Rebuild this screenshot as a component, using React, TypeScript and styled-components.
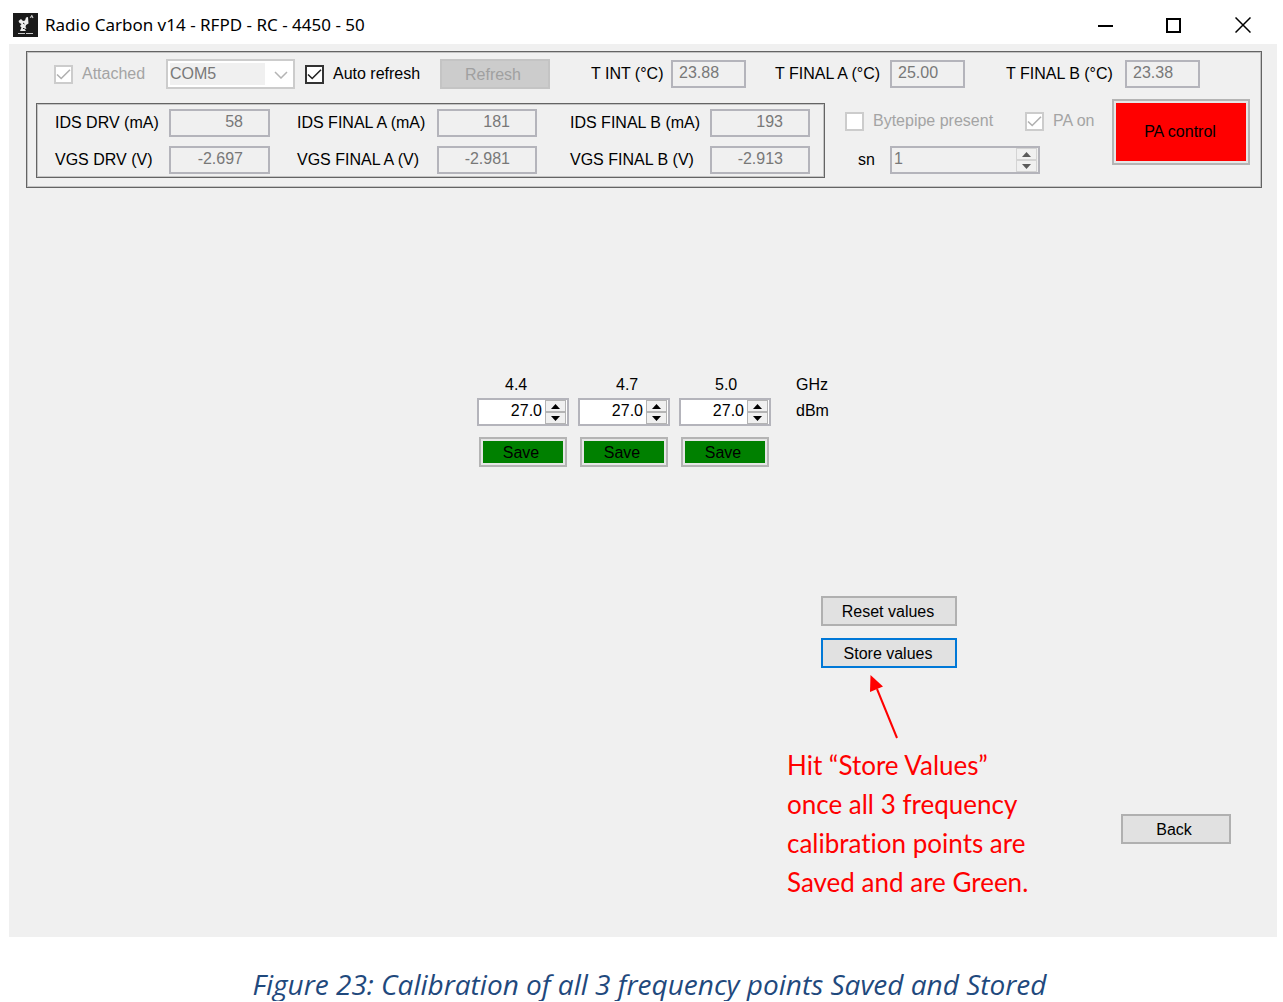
import React, { useState } from "react";
import styled, { createGlobalStyle, css } from "styled-components";

const ui = `"Liberation Sans", Arial, sans-serif`;

const GlobalStyle = createGlobalStyle`
  * { box-sizing: border-box; }
  body { margin: 0; background: #fff; color: #000; font: 16px/20px ${ui}; }
  button, input, select { font: inherit; color: inherit; margin: 0; border-radius: 0; }
`;

const Page = styled.figure`
  margin: 0;
  padding: 0 6px 0 9px;
`;

const TitleBar = styled.header`
  display: flex;
  align-items: center;
  height: 44px;
  padding: 6px 0 0 4px;
  background: #fff;
`;

const Title = styled.h1`
  flex: 1;
  margin: 0 0 0 7px;
  font: 400 17px/24px "Noto Sans", "Open Sans", sans-serif;
`;

const CaptionButton = styled.button`
  display: grid;
  place-items: center;
  width: 69px;
  height: 38px;
  padding: 0;
  border: 0;
  background: transparent;
`;

const Client = styled.main`
  display: flex;
  flex-direction: column;
  padding: 7px 15px 35px 17px;
  background: #f0f0f0;
`;

const frame = css`
  border: 1px solid #646464;
  box-shadow: inset 0 0 0 1px #c4c4c4;
`;

const StatusPanel = styled.section`
  ${frame}
  display: flex;
  flex-direction: column;
  gap: 10px;
  padding: 7px 11px 9px 9px;
`;

const ConnectionRow = styled.div`
  display: grid;
  grid-template-columns: 112px 139px 135px 151px 80px 104px 115px 116px 119px 75px;
  align-items: center;
  height: 30px;
  padding-left: 18px;
`;

const ReadingsRow = styled.div`
  display: flex;
  align-items: flex-start;
`;

const Readings = styled.div`
  ${frame}
  display: grid;
  grid-template-columns: 114px 101px 167px 100px 173px 100px;
  row-gap: 9px;
  align-items: center;
  margin-top: 4px;
  padding: 5px 14px 3px 18px;
`;

const Label = styled.label<{ $indent?: number }>`
  padding-left: ${(p) => p.$indent ?? 0}px;
  white-space: nowrap;
`;

const Field = styled.input`
  width: 100%;
  height: 28px;
  padding: 0 25px 2px 6px;
  border: 2px solid #b4b4bb;
  background: #f0f0f0;
  color: #787878;
  outline: 0;
`;

const Temperature = styled(Field)`
  width: 75px;
  padding: 0 6px 2px;
`;

const Reading = styled(Field)`
  text-align: right;
`;

const CheckLabel = styled.label<{ $disabled?: boolean }>`
  display: flex;
  align-items: center;
  gap: 9px;
  white-space: nowrap;
  color: ${(p) => (p.$disabled ? "#a4a4a4" : "#000")};
`;

const CheckCell = styled.span`
  display: grid;
  & > * { grid-area: 1 / 1; }
  & > svg { pointer-events: none; display: none; }
  & > input:checked + svg { display: block; }
`;

const CheckBox = styled.input`
  appearance: none;
  width: 19px;
  height: 19px;
  border: 2px solid #333;
  background: #fff;
  &:disabled { border-color: #ccc; }
`;

const ComboFrame = styled.div`
  display: flex;
  align-items: center;
  width: 129px;
  height: 30px;
  padding: 2px;
  border: 2px solid #ccc;
  background: #fff;
`;

const Combo = styled.select`
  appearance: none;
  width: 95px;
  height: 22px;
  padding: 0;
  border: 0;
  background: #f0f0f0;
  color: #787878;
  opacity: 1;
`;

const ChevronCell = styled.span`
  display: grid;
  flex: 1;
  place-items: center;
  padding: 2px 0 0 6px;
`;

const PushButton = styled.button<{ $wide?: boolean; $focused?: boolean }>`
  width: ${(p) => (p.$wide ? 136 : 110)}px;
  height: 30px;
  padding: ${(p) => (p.$wide ? "2px 2px 0 0" : "2px 4px 0 0")};
  border: 2px solid ${(p) => (p.$focused ? "#0078d7" : "#b0b0b0")};
  background: #e1e1e1;
  &:disabled { border-color: #c4c4c4; background: #ccc; color: #a0a0a0; }
`;

const ColorButton = styled.button<{ $color: string; $large?: boolean }>`
  width: ${(p) => (p.$large ? 138 : 88)}px;
  height: ${(p) => (p.$large ? 66 : 30)}px;
  padding: ${(p) => (p.$large ? "0 2px 0 0" : "2px 4px 0 0")};
  border: 2px solid #b4b4b4;
  box-shadow: inset 0 0 0 2px #e6e6e6;
  background: ${(p) => p.$color};
`;

const ModuleOptions = styled.div`
  display: flex;
  flex-direction: column;
  gap: 15px;
  margin: 12px 0 0 20px;
`;

const CheckRow = styled.div`
  display: grid;
  grid-template-columns: 180px auto;
  height: 20px;
`;

const SerialRow = styled.div`
  display: grid;
  grid-template-columns: 32px 150px;
  align-items: center;
  padding-left: 13px;
`;

const Right = styled.div`
  margin-left: auto;
`;

const SpinFrame = styled.div<{ $disabled?: boolean }>`
  display: flex;
  height: 28px;
  padding: 0 1px;
  border: 2px solid #b4b4bb;
  background: ${(p) => (p.$disabled ? "#f0f0f0" : "#fff")};
`;

const SpinInput = styled.input`
  flex: 1;
  min-width: 0;
  padding: 0 3px 2px 1px;
  border: 0;
  outline: 0;
  background: transparent;
  appearance: textfield;
  &::-webkit-inner-spin-button { appearance: none; margin: 0; }
  &:disabled { color: #787878; }
`;

const SpinButtons = styled.div`
  display: grid;
  grid-template-rows: 12px 12px;
  width: 21px;
`;

const SpinButton = styled.button`
  display: grid;
  place-items: center;
  padding: 0;
  border: 1px solid #b4b4b4;
  background: #f0f0f0;
  color: #000;
  &:disabled { border-color: #d4d4d4; color: #5a5a5a; }
`;

const Calibration = styled.section`
  display: grid;
  gap: 11px;
  margin: 187px 0 0 451px;
`;

const FrequencyTable = styled.div`
  display: grid;
  gap: 3px;
`;

const FrequencyRow = styled.div`
  display: grid;
  grid-template-columns: 111px 99px 81px auto;
  padding-left: 28px;
`;

const PointRow = styled.div`
  display: grid;
  grid-template-columns: 92px 92px 92px auto;
  column-gap: 9px;
`;

const SaveRow = styled(PointRow)`
  justify-items: center;
`;

const Unit = styled.span`
  padding: 3px 0 0 16px;
`;

const Lower = styled.section`
  display: flex;
  justify-content: space-between;
  align-items: flex-end;
  margin: 129px 31px 0 761px;
`;

const StoreColumn = styled.div`
  display: flex;
  flex-direction: column;
`;

const StoreButtons = styled.div`
  display: grid;
  gap: 12px;
  padding-left: 34px;
`;

const Arrow = styled.svg`
  margin: 7px 0 7px 82px;
`;

const Note = styled.p`
  margin: 0;
  color: #f00;
  font: 26px/39px Lato, sans-serif;
  font-variant-ligatures: none;
  white-space: nowrap;
  & > span { display: block; }
`;

const BackCell = styled.div`
  padding-bottom: 58px;
`;

const Caption = styled.figcaption`
  padding: 30px 0 0 13px;
  color: #1f497d;
  font: italic 28px/34px "Open Sans", sans-serif;
  text-align: center;
`;

function AppIcon() {
  return (
    <svg width="25" height="24" viewBox="0 0 25 24" aria-hidden="true">
      <rect width="25" height="24" fill="#1a1a1a" />
      <path d="M5.500 8 L8 6 L10 8 L12 7.500 L13 4.500 L15 4 L15.500 10.500 L13 12 L12.500 14 L13.500 15.500 L11.500 16 L13 18 L7 18 L8.500 14.500 L7 13 L8.500 11 L6.500 10 Z" fill="#eee" />
      <path d="M10 10 L11.500 11 M10 15.500 H11.500" stroke="#1a1a1a" />
      <path d="M17 4.500 L19.500 3 M18.500 2 L20 5" stroke="#ccc" strokeWidth="1.200" fill="none" />
      <path d="M5 20.500 H20" stroke="#ccc" strokeDasharray="7 1" />
    </svg>
  );
}

function Check({ id, label, checked, disabled }: { id: string; label: string; checked?: boolean; disabled?: boolean }) {
  return (
    <CheckLabel htmlFor={id} $disabled={disabled}>
      <CheckCell>
        <CheckBox id={id} type="checkbox" defaultChecked={checked} disabled={disabled} />
        <svg width="19" height="19" viewBox="0 0 19 19" fill="none" stroke={disabled ? "#b0b0b0" : "#222"} strokeWidth="1.600">
          <path d="M3 9.500 L7.200 13.500 L16 4.800" />
        </svg>
      </CheckCell>
      {label}
    </CheckLabel>
  );
}

function Spin({ id, label, start, digits, step, disabled }: { id: string; label?: string; start: number; digits: number; step: number; disabled?: boolean }) {
  const [value, setValue] = useState(start.toFixed(digits));
  const change = (by: number) => setValue((Number(value) + by).toFixed(digits));
  return (
    <SpinFrame $disabled={disabled}>
      <SpinInput
        id={id}
        type="number"
        aria-label={label}
        step={step}
        value={value}
        disabled={disabled}
        style={{ textAlign: digits > 0 ? "right" : "left" }}
        onChange={(e) => setValue(e.target.value)}
      />
      <SpinButtons>
        <SpinButton type="button" aria-label="Increase" disabled={disabled} onClick={() => change(step)}>
          <svg width="9" height="5" viewBox="0 0 9 5"><path d="M0 5 L4.500 0 L9 5 Z" fill="currentColor" /></svg>
        </SpinButton>
        <SpinButton type="button" aria-label="Decrease" disabled={disabled} onClick={() => change(-step)}>
          <svg width="9" height="5" viewBox="0 0 9 5"><path d="M0 0 L4.500 5 L9 0 Z" fill="currentColor" /></svg>
        </SpinButton>
      </SpinButtons>
    </SpinFrame>
  );
}

const temperatures = [
  { id: "t-int", label: "T INT (°C)", value: "23.88" },
  { id: "t-final-a", label: "T FINAL A (°C)", value: "25.00" },
  { id: "t-final-b", label: "T FINAL B (°C)", value: "23.38" },
];

const readings = [
  { id: "ids-drv", label: "IDS DRV (mA)", value: "58", indent: 0 },
  { id: "ids-a", label: "IDS FINAL A (mA)", value: "181", indent: 27 },
  { id: "ids-b", label: "IDS FINAL B (mA)", value: "193", indent: 33 },
  { id: "vgs-drv", label: "VGS DRV (V)", value: "-2.697", indent: 0 },
  { id: "vgs-a", label: "VGS FINAL A (V)", value: "-2.981", indent: 27 },
  { id: "vgs-b", label: "VGS FINAL B (V)", value: "-2.913", indent: 33 },
];

const frequencies = ["4.4", "4.7", "5.0"];

export default function App() {
  return (
    <>
      <GlobalStyle />
      <Page>
        <TitleBar>
          <AppIcon />
          <Title>Radio Carbon v14 - RFPD - RC - 4450 - 50</Title>
          <CaptionButton aria-label="Minimize">
            <svg width="16" height="16" viewBox="0 0 16 16"><path d="M1 9 H16" stroke="#000" strokeWidth="2" /></svg>
          </CaptionButton>
          <CaptionButton aria-label="Maximize">
            <svg width="16" height="16" viewBox="0 0 16 16"><rect x="1" y="2" width="13" height="13" fill="none" stroke="#000" strokeWidth="2" /></svg>
          </CaptionButton>
          <CaptionButton aria-label="Close">
            <svg width="16" height="16" viewBox="0 0 16 16"><path d="M.5 .5 L15.500 15.500 M15.500 .5 L.5 15.500" stroke="#000" strokeWidth="1.500" /></svg>
          </CaptionButton>
        </TitleBar>

        <Client>
          <StatusPanel>
            <ConnectionRow>
              <Check id="attached" label="Attached" checked disabled />
              <ComboFrame>
                <Combo aria-label="Port" disabled defaultValue="COM5">
                  <option>COM5</option>
                </Combo>
                <ChevronCell>
                  <svg width="14" height="8" viewBox="0 0 14 8"><path d="M1 1 L7 7 L13 1" fill="none" stroke="#b4b4b4" strokeWidth="1.500" /></svg>
                </ChevronCell>
              </ComboFrame>
              <Check id="auto" label="Auto refresh" checked />
              <PushButton disabled>Refresh</PushButton>
              {temperatures.map((t) => (
                <React.Fragment key={t.id}>
                  <Label htmlFor={t.id}>{t.label}</Label>
                  <Temperature id={t.id} value={t.value} readOnly />
                </React.Fragment>
              ))}
            </ConnectionRow>

            <ReadingsRow>
              <Readings>
                {readings.map((r) => (
                  <React.Fragment key={r.id}>
                    <Label htmlFor={r.id} $indent={r.indent}>{r.label}</Label>
                    <Reading id={r.id} value={r.value} readOnly />
                  </React.Fragment>
                ))}
              </Readings>
              <ModuleOptions>
                <CheckRow>
                  <Check id="bytepipe" label="Bytepipe present" disabled />
                  <Check id="pa-on" label="PA on" checked disabled />
                </CheckRow>
                <SerialRow>
                  <Label htmlFor="sn">sn</Label>
                  <Spin id="sn" start={1} digits={0} step={1} disabled />
                </SerialRow>
              </ModuleOptions>
              <Right>
                <ColorButton $color="#f00" $large>PA control</ColorButton>
              </Right>
            </ReadingsRow>
          </StatusPanel>

          <Calibration>
            <FrequencyTable>
              <FrequencyRow>
                {frequencies.map((f) => <span key={f}>{f}</span>)}
                <span>GHz</span>
              </FrequencyRow>
              <PointRow>
                {frequencies.map((f) => (
                  <Spin key={f} id={`p-${f}`} label={`${f} GHz level`} start={27} digits={1} step={0.1} />
                ))}
                <Unit>dBm</Unit>
              </PointRow>
            </FrequencyTable>
            <SaveRow>
              {frequencies.map((f) => <ColorButton key={f} $color="#008000">Save</ColorButton>)}
            </SaveRow>
          </Calibration>

          <Lower>
            <StoreColumn>
              <StoreButtons>
                <PushButton $wide>Reset values</PushButton>
                <PushButton $wide $focused>Store values</PushButton>
              </StoreButtons>
              <Arrow width="30" height="64" viewBox="0 0 30 64" aria-hidden="true">
                <path d="M28 63 L8 14" stroke="#f00" strokeWidth="2" />
                <path d="M1.500 0 L14 11.500 L1 17 Z" fill="#f00" />
              </Arrow>
              <Note>
                <span>Hit “Store Values”</span>
                <span>once all 3 frequency</span>
                <span>calibration points are</span>
                <span>Saved and are Green.</span>
              </Note>
            </StoreColumn>
            <BackCell>
              <PushButton>Back</PushButton>
            </BackCell>
          </Lower>
        </Client>

        <Caption>Figure 23: Calibration of all 3 frequency points Saved and Stored</Caption>
      </Page>
    </>
  );
}
